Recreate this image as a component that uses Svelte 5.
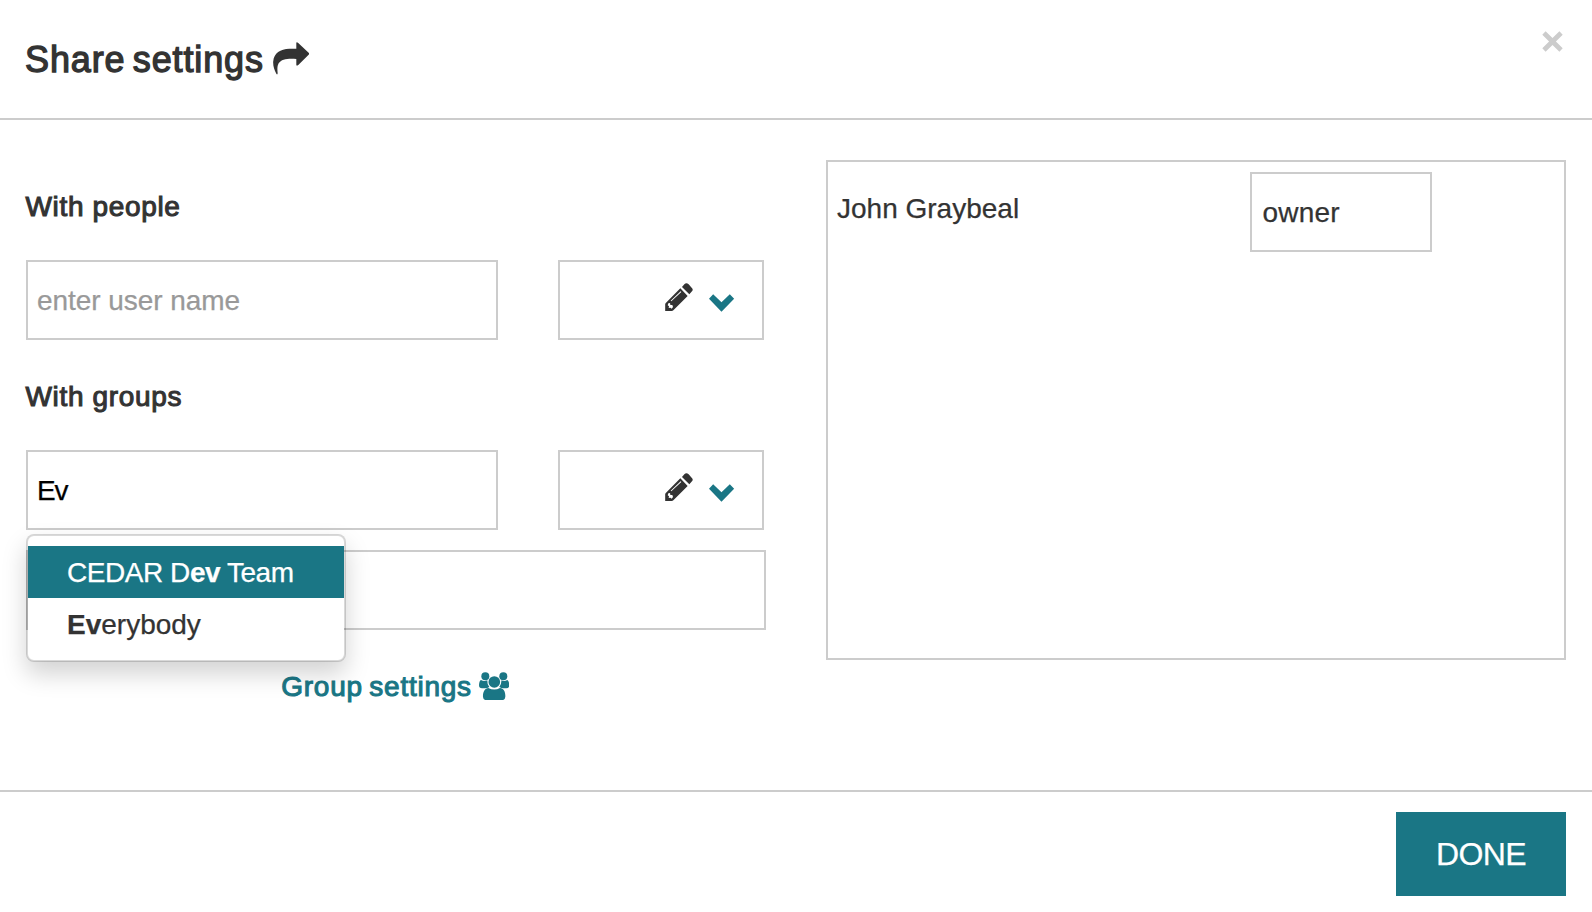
<script>
  let userName = $state('');
  let groupName = $state('Ev');
  const suggestions = [
    { before: 'CEDAR D', match: 'ev', after: ' Team' },
    { before: '', match: 'Ev', after: 'erybody' }
  ];
  const members = [{ name: 'John Graybeal', role: 'owner' }];
</script>

{#snippet permission()}
  <button class="select" aria-label="Permission">
    <svg class="pencil" viewBox="375 98 84 85">
      <path fill="#333" fill-rule="evenodd" d="M421 114 L443 137 L400 180 Q398 182 395 182 H375.500 V162 Q375.500 159 378 157 Z M392 151 L394 153 L424 125 L422 123 Z M385 159 L383 165 L387 168 L386 173 L391 172 L395 175 L399 170 L397 164 L391 164 L390 158 Z" />
      <path fill="#333" d="M426 110 L433 102 Q439 96 446 102 L455 112 Q461 118 456 123 L448 132 Z" />
    </svg>
    <svg class="chevron" viewBox="508 134 76 53">
      <path fill="#1a7685" d="M508 148.500 L520.500 135 L545.500 159 L570.500 135 L583.500 148.500 L545.500 187 Z" />
    </svg>
  </button>
{/snippet}

<div class="modal">
  <header>
    <h1>Share settings</h1>
    <svg class="share" viewBox="819 66 109 98">
      <path fill="#333" d="M889 69 Q889 65 894 68 L926 98 Q929 101 926 104 L895 135 Q889 139 889 134 V117 C865 115 844 117 836 130 C831 139 832 151 833 160 Q832 166 829 161 C823 149 819 138 819.500 125 C822 98 841 87 868 86 H889 Z" />
    </svg>
    <button class="close" aria-label="Close">
      <svg viewBox="0 0 21 21"><path fill="#ccc" d="M.3 3.700 3.600.3 10.500 7.100 17.400.3 20.700 3.700 13.900 10.500 20.700 17.300 17.400 20.700 10.500 13.900 3.600 20.700.3 17.300 7.100 10.500Z" /></svg>
    </button>
  </header>

  <main>
    <section class="forms">
      <h2>With people</h2>
      <div class="row">
        <input bind:value={userName} placeholder="enter user name" />
        {@render permission()}
      </div>
      <h2 class="second">With groups</h2>
      <div class="row">
        <div class="typeahead">
          <input class="query" bind:value={groupName} />
          <ul>
            {#each suggestions as s, i}
              <li class:active={i === 0}>{s.before}<strong>{s.match}</strong>{s.after}</li>
            {/each}
          </ul>
        </div>
        {@render permission()}
      </div>
      <div class="blank"></div>
      <div class="link">
        <span>Group settings</span>
        <svg viewBox="657 155 91 85" fill="#1a7685">
          <circle cx="676" cy="167.500" r="12" />
          <circle cx="730" cy="167.500" r="12" />
          <circle cx="703" cy="185" r="17.500" />
          <path d="M663 179 Q672 185 682 180 Q681 192 688 200 Q682 204 675 204 H666 Q657 204 657 194 Q658 181 663 179Z" />
          <path d="M742 179 Q733 185 724 180 Q725 192 718 200 Q724 204 730 204 H739 Q748 204 748 194 Q747 181 742 179Z" />
          <path d="M685 203 Q703 212 720 203 C732 204 737 216 736 230 Q735 240 724 240 H681 Q670 240 669 230 C668 216 674 204 685 203Z" />
        </svg>
      </div>
    </section>

    <section class="members">
      {#each members as m}
        <div class="member">
          <span class="name">{m.name}</span>
          <span class="role">{m.role}</span>
        </div>
      {/each}
    </section>
  </main>

  <footer>
    <button class="done">DONE</button>
  </footer>
</div>

<style>
  :global(body) { background: #fff; }
  .modal, .modal * { box-sizing: border-box; }
  .modal {
    width: 1592px; height: 912px; overflow: hidden;
    display: flex; flex-direction: column;
    font-family: "Liberation Sans", Arial, sans-serif;
    font-size: 28px; line-height: 40px; color: #333;
    -webkit-text-stroke: .25px currentColor;
  }
  svg { display: block; flex: none; }
  button { font: inherit; background: none; border: 0; padding: 0; margin: 0; }
  header {
    height: 120px; flex: none; display: flex; align-items: flex-start;
    padding: 36px 29px 0 25px; border-bottom: 2px solid #ccc;
  }
  h1, h2 { margin: 0; font-weight: 400; }
  h1 {
    font-size: 36px; line-height: 48px; letter-spacing: .87px; word-spacing: -3.500px;
    -webkit-text-stroke: 1.300px #333;
  }
  .share { width: 36.300px; height: 32.700px; margin: 6px 0 0 9.200px; }
  .close { margin-left: auto; margin-top: -5px; }
  .close svg { width: 21px; height: 21px; }
  main { height: 670px; flex: none; display: flex; gap: 60px; padding: 40px 26px 0; }
  .forms { width: 740px; padding-top: 27px; }
  h2 { font-size: 28px; letter-spacing: .65px; margin-left: -.5px; -webkit-text-stroke: 1.050px #333; }
  .second { margin-top: 37px; }
  .row { display: flex; gap: 60px; margin-top: 33px; }
  input {
    display: block; width: 472px; height: 80px; margin: 0; padding: 2px 9px 0;
    border: 2px solid #ccc; border-radius: 0; background: #fff;
    font: inherit; color: #000; outline: 0; letter-spacing: -.05px;
    -webkit-text-stroke: .25px currentColor;
  }
  .query { letter-spacing: -1.200px; }
  input::placeholder { color: #999; opacity: 1; }
  .select {
    width: 206px; height: 80px; border: 2px solid #ccc;
    display: flex; justify-content: flex-end; align-items: flex-start;
    gap: 16.300px; padding: 20.700px 27.500px 0 0;
  }
  .pencil { width: 28px; height: 28.300px; }
  .chevron { width: 25.300px; height: 17.700px; margin-top: 11.600px; }
  .typeahead { position: relative; }
  ul {
    position: absolute; z-index: 2; left: 0; top: 84px; width: 320px; height: 128px;
    margin: 0; padding: 10px 0; list-style: none; background: #fff; background-clip: padding-box;
    border: 2px solid rgba(0, 0, 0, .15); border-radius: 8px;
    box-shadow: 0 12px 24px rgba(0, 0, 0, .175);
  }
  li { height: 52px; padding: 7px 0 0 39px; white-space: nowrap; }
  .active { background: #1a7685; color: #fff; letter-spacing: -.45px; }
  .blank { height: 80px; margin-top: 20px; border: 2px solid #ccc; }
  .link { display: flex; justify-content: center; gap: 6.700px; margin-top: 37px; padding-right: 2px; color: #1a7685; }
  .link span { letter-spacing: .75px; word-spacing: -2px; -webkit-text-stroke: 1.050px #1a7685; }
  .link svg { width: 30.300px; height: 28.300px; margin-top: 4.700px; }
  .members { width: 740px; height: 500px; border: 2px solid #ccc; padding: 10px 132px 0 9px; }
  .member { display: flex; justify-content: space-between; align-items: flex-start; }
  .name { margin-top: 17px; }
  .role { width: 182px; height: 80px; padding: 19px 10.500px 0; border: 2px solid #ccc; letter-spacing: .2px; }
  footer { flex: 1; border-top: 2px solid #ccc; display: flex; justify-content: flex-end; align-items: flex-start; padding: 20px 26px 0; }
  .done { width: 170px; height: 84px; background: #1a7685; color: #fff; font-size: 32px; letter-spacing: -.6px; padding-bottom: 1px; -webkit-text-stroke: .25px currentColor; }
</style>
